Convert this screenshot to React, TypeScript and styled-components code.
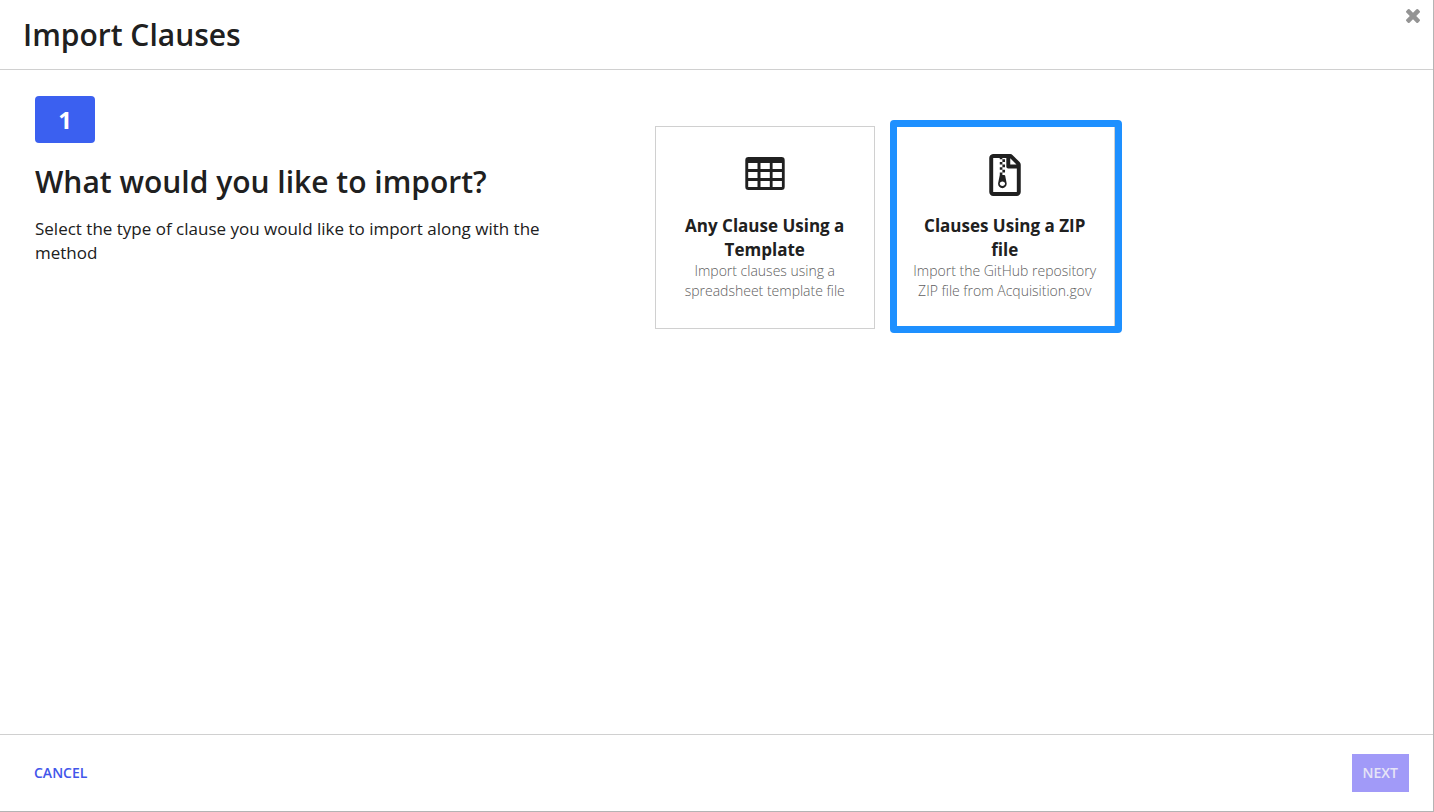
import React from "react";
import styled, { createGlobalStyle } from "styled-components";
import { FaRegFileArchive } from "react-icons/fa";

const GlobalStyle = createGlobalStyle`
  * { box-sizing: border-box; }
  body {
    margin: 0;
    background: #fff;
    color: #202020;
    font-family: "Open Sans", "Liberation Sans", sans-serif;
  }
  h1, h2, p { margin: 0; }
  button { font-family: inherit; cursor: pointer; }
`;

const Dialog = styled.div`
  display: flex;
  flex-direction: column;
  min-height: 100vh;
  border-right: 1px solid #b4b4b4;
  border-bottom: 1px solid #b4b4b4;
`;

const Header = styled.header`
  display: flex;
  justify-content: space-between;
  align-items: flex-start;
  padding: 0 13px 0 23px;
  border-bottom: 1px solid #d0d0d0;
`;

const Title = styled.h1`
  padding: 14px 0 13px;
  font-size: 30px;
  line-height: 42px;
  font-weight: 600;
`;

const CloseButton = styled.button`
  display: flex;
  margin-top: 9px;
  padding: 0;
  border: 0;
  background: none;
  color: #949494;
`;

const Content = styled.main`
  flex: 1;
  display: grid;
  grid-template-columns: 44% 1fr;
  column-gap: 20px;
  align-items: start;
  padding: 26px 35px;
`;

const Step = styled.section`
  padding-right: 80px;
`;

const StepNumber = styled.div`
  display: flex;
  align-items: center;
  justify-content: center;
  width: 60px;
  height: 47px;
  border-radius: 4px;
  background: #3b60f0;
  color: #fff;
  font-size: 24px;
  line-height: 32px;
  font-weight: 700;
`;

const Question = styled.h2`
  margin-top: 18px;
  font-size: 30px;
  line-height: 42px;
  font-weight: 600;
`;

const Help = styled.p`
  margin-top: 14px;
  font-size: 17px;
  line-height: 24px;
`;

const Options = styled.div`
  display: flex;
  flex-wrap: wrap;
  gap: 20px;
  padding-top: 30px;
`;

const OptionCard = styled.button<{ $highlighted?: boolean }>`
  position: relative;
  display: flex;
  flex-direction: column;
  align-items: center;
  width: 220px;
  padding: 26px 15px 27px;
  border: 1px solid #d0d0d0;
  background: #fff;
  color: #202020;
  text-align: center;

  &::after {
    content: "";
    display: ${({ $highlighted }) => ($highlighted ? "block" : "none")};
    position: absolute;
    inset: -7px -8px -5px -6px;
    border: 7px solid #1e90ff;
    border-radius: 4px;
  }
`;

const OptionIcon = styled.span`
  display: flex;
  align-items: center;
  height: 44px;
  margin-bottom: 17px;
`;

const OptionTitle = styled.span`
  font-size: 17px;
  line-height: 24px;
  font-weight: 700;
`;

const OptionText = styled.span`
  margin-top: -1px;
  color: #606060;
  font-size: 14px;
  line-height: 20px;
  font-weight: 300;
`;

const Footer = styled.footer`
  display: flex;
  justify-content: space-between;
  align-items: center;
  padding: 19px 24px 19px 34px;
  border-top: 1px solid #d0d0d0;
`;

const CancelButton = styled.button`
  padding: 0;
  border: 0;
  background: none;
  color: #4256ea;
  font-size: 14px;
  line-height: 20px;
  font-weight: 600;
`;

const NextButton = styled.button`
  padding: 9px 11px;
  border: 0;
  background: #a19af8;
  color: #e6e4f6;
  font-size: 14px;
  line-height: 20px;
  font-weight: 600;
`;

const CloseIcon = () => (
  <svg width="14" height="14" viewBox="110 366 1188 1188" fill="currentColor" aria-hidden="true">
    <path d="M1298 1322q0 40-28 68l-136 136q-28 28-68 28t-68-28l-294-294-294 294q-28 28-68 28t-68-28l-136-136q-28-28-28-68t28-68l294-294-294-294q-28-28-28-68t28-68l136-136q28-28 68-28t68 28l294 294 294-294q28-28 68-28t68 28l136 136q28 28 28 68t-28 68l-294 294 294 294q28 28 28 68z" />
  </svg>
);

const TableIcon = () => (
  <svg width="40" height="36" viewBox="0 0 40 36" fill="currentColor" aria-hidden="true">
    <path
      fillRule="evenodd"
      d="M3.500 0h33a3.200 3.200 0 0 1 3.200 3.200v26.600a3.200 3.200 0 0 1-3.200 3.200h-33a3.200 3.200 0 0 1-3.200-3.200V3.200A3.200 3.200 0 0 1 3.500 0zM3.200 6v6h9.300V6zM15.500 6v6h9.300V6zM27.600 6v6h9.300V6zM3.200 15v6h9.300v-6zM15.500 15v6h9.300v-6zM27.600 15v6h9.300v-6zM3.200 24v6h9.300v-6zM15.500 24v6h9.300v-6zM27.600 24v6h9.300v-6z"
    />
  </svg>
);

const options = [
  {
    title: "Any Clause Using a Template",
    text: "Import clauses using a spreadsheet template file",
    icon: <TableIcon />,
    highlighted: false,
  },
  {
    title: "Clauses Using a ZIP file",
    text: "Import the GitHub repository ZIP file from Acquisition.gov",
    icon: <FaRegFileArchive size={42} aria-hidden="true" />,
    highlighted: true,
  },
];

export default function App() {
  return (
    <>
      <GlobalStyle />
      <Dialog role="dialog" aria-labelledby="dialog-title">
        <Header>
          <Title id="dialog-title">Import Clauses</Title>
          <CloseButton type="button" aria-label="Close">
            <CloseIcon />
          </CloseButton>
        </Header>
        <Content>
          <Step>
            <StepNumber>1</StepNumber>
            <Question>What would you like to import?</Question>
            <Help>Select the type of clause you would like to import along with the method</Help>
          </Step>
          <Options>
            {options.map((option) => (
              <OptionCard key={option.title} type="button" $highlighted={option.highlighted}>
                <OptionIcon>{option.icon}</OptionIcon>
                <OptionTitle>{option.title}</OptionTitle>
                <OptionText>{option.text}</OptionText>
              </OptionCard>
            ))}
          </Options>
        </Content>
        <Footer>
          <CancelButton type="button">CANCEL</CancelButton>
          <NextButton type="button">NEXT</NextButton>
        </Footer>
      </Dialog>
    </>
  );
}
